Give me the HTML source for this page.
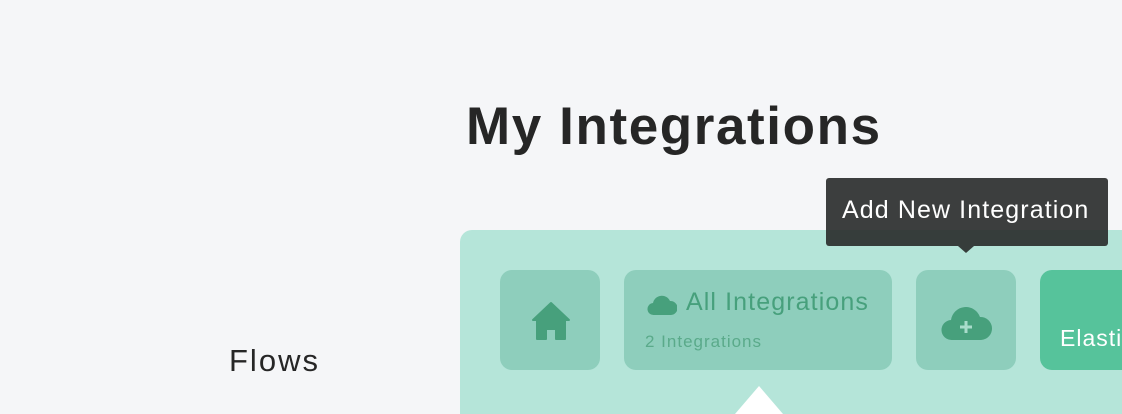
<!DOCTYPE html>
<html><head><style>
body{margin:0;width:1122px;height:414px;overflow:hidden;background:#f5f6f8;font-family:"Liberation Sans",sans-serif;position:relative}
.a{position:absolute}
.tile{position:absolute;top:270px;height:100px;background:#8ecebc;border-radius:12px}
</style></head><body>
<div class="a" style="left:466px;top:96px;font-size:53px;font-weight:bold;color:#262626;letter-spacing:1.6px">My Integrations</div>
<div class="a" style="left:229px;top:343px;font-size:31px;color:#262626;letter-spacing:2px">Flows</div>
<div class="a" style="left:460px;top:230px;width:700px;height:184px;background:#b5e5d9;border-radius:12px 0 0 0"></div>
<div class="tile" style="left:500px;width:100px">
<svg class="a" style="left:31px;top:31px" width="40" height="40" viewBox="0 0 40 40"><path d="M20 2 L38 19 L34 19 L34 38 L25 38 L25 28 L15 28 L15 38 L6 38 L6 19 L2 19 Z" fill="#47a07c" stroke="#47a07c" stroke-linejoin="round" stroke-width="2"/></svg>
</div>
<div class="tile" style="left:624px;width:268px">
<svg class="a" style="left:23px;top:22px" width="30" height="24" viewBox="0 0 30 24"><path d="M7 23 A6 6 0 0 1 6 11 A9 9 0 0 1 23 9 A7 7 0 0 1 24 23 Z" fill="#47a07c"/></svg>
<div class="a" style="left:62px;top:18px;font-size:25px;color:#47a07c;letter-spacing:1.1px">All Integrations</div>
<div class="a" style="left:21px;top:62px;font-size:17px;color:#5aaa8a;letter-spacing:1px">2 Integrations</div>
</div>
<div class="tile" style="left:916px;width:100px">
<svg class="a" style="left:24px;top:30px" width="52" height="42" viewBox="0 0 52 42"><path d="M12 40 A10 10 0 0 1 11 20 A15 15 0 0 1 40 17 A11.5 11.5 0 0 1 41 40 Z" fill="#47a07c"/><path d="M26 21 V33 M20 27 H32" stroke="#a9dccb" stroke-width="3"/></svg>
</div>
<div class="a" style="left:1040px;top:270px;width:120px;height:100px;background:#56c39b;border-radius:12px"></div>
<div class="a" style="left:1060px;top:325px;font-size:23px;color:#fff;letter-spacing:1px">Elastic</div>
<div class="a" style="left:735px;top:386px;width:0;height:0;border-left:24px solid transparent;border-right:24px solid transparent;border-bottom:28px solid #fff"></div>
<div class="a" style="left:826px;top:178px;width:282px;height:68px;background:rgba(40,42,41,0.9);border-radius:3px"></div>
<div class="a" style="left:958px;top:246px;width:0;height:0;border-left:8px solid transparent;border-right:8px solid transparent;border-top:7px solid rgba(40,42,41,0.9)"></div>
<div class="a" style="left:842px;top:196px;font-size:25px;color:#fff;letter-spacing:1.1px">Add New Integration</div>
</body></html>
